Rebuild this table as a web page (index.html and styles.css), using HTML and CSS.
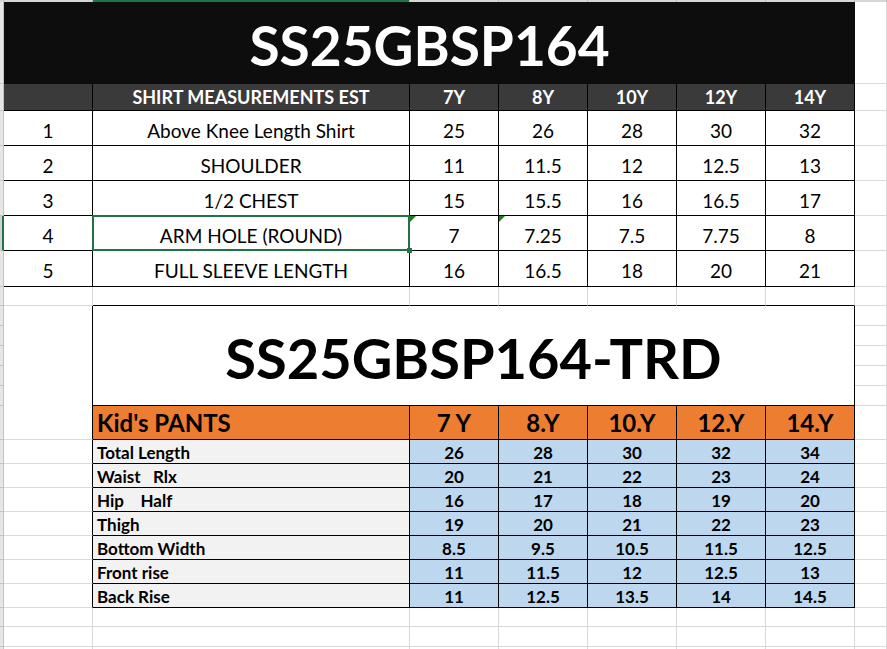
FILE: index.html
```html
<!DOCTYPE html>
<html>
<head>
<meta charset="utf-8">
<title>SS25GBSP164</title>
<link rel="stylesheet" href="styles.css">
</head>
<body>
<div class="sheet">
  <!-- column header edge -->
  <div class="rh top"></div><div class="ch"></div><div class="ch sel"></div><div class="ch"></div><div class="ch"></div><div class="ch"></div><div class="ch"></div><div class="ch"></div><div class="ch"></div>

  <!-- shirt title -->
  <div class="rh"></div><div class="title">SS25GBSP164</div><div class="g"></div>

  <!-- shirt header -->
  <div class="rh"></div>
  <div class="hdr"></div>
  <div class="hdr">SHIRT MEASUREMENTS EST</div>
  <div class="hdr">7Y</div><div class="hdr">8Y</div><div class="hdr">10Y</div><div class="hdr">12Y</div><div class="hdr">14Y</div>
  <div class="g"></div>

  <div class="rh"></div><div class="c">1</div><div class="c">Above Knee Length Shirt</div><div class="c">25</div><div class="c">26</div><div class="c">28</div><div class="c">30</div><div class="c">32</div><div class="g"></div>
  <div class="rh"></div><div class="c">2</div><div class="c">SHOULDER</div><div class="c">11</div><div class="c">11.5</div><div class="c">12</div><div class="c">12.5</div><div class="c">13</div><div class="g"></div>
  <div class="rh"></div><div class="c">3</div><div class="c">1/2 CHEST</div><div class="c">15</div><div class="c">15.5</div><div class="c">16</div><div class="c">16.5</div><div class="c">17</div><div class="g"></div>
  <div class="rh rsel"></div><div class="c">4</div><div class="c csel">ARM HOLE (ROUND)</div><div class="c err">7</div><div class="c err">7.25</div><div class="c">7.5</div><div class="c">7.75</div><div class="c">8</div><div class="g"></div>
  <div class="rh"></div><div class="c">5</div><div class="c">FULL SLEEVE LENGTH</div><div class="c">16</div><div class="c">16.5</div><div class="c">18</div><div class="c">20</div><div class="c">21</div><div class="g"></div>

  <!-- gap row -->
  <div class="rh"></div><div class="g"></div><div class="g bk-b"></div><div class="g bk-b"></div><div class="g bk-b"></div><div class="g bk-b"></div><div class="g bk-b"></div><div class="g bk-b"></div><div class="g"></div>

  <!-- pants title (5 sheet rows) -->
  <div class="rh"></div><div class="g bk-r aspan"></div><div class="ptitle">SS25GBSP164-TRD</div><div class="g"></div>
  <div class="rh"></div><div class="g"></div>
  <div class="rh"></div><div class="g"></div>
  <div class="rh"></div><div class="g"></div>
  <div class="rh"></div><div class="g"></div>

  <!-- pants header -->
  <div class="rh"></div><div class="g bk-r"></div>
  <div class="or left">Kid's PANTS</div>
  <div class="or">7 Y</div><div class="or">8.Y</div><div class="or">10.Y</div><div class="or">12.Y</div><div class="or">14.Y</div>
  <div class="g"></div>

  <div class="rh"></div><div class="g bk-r"></div><div class="lab">Total Length</div><div class="v">26</div><div class="v">28</div><div class="v">30</div><div class="v">32</div><div class="v">34</div><div class="g"></div>
  <div class="rh"></div><div class="g bk-r"></div><div class="lab">Waist&nbsp;&nbsp;&nbsp;Rlx</div><div class="v">20</div><div class="v">21</div><div class="v">22</div><div class="v">23</div><div class="v">24</div><div class="g"></div>
  <div class="rh"></div><div class="g bk-r"></div><div class="lab">Hip&nbsp;&nbsp;&nbsp;&nbsp;Half</div><div class="v">16</div><div class="v">17</div><div class="v">18</div><div class="v">19</div><div class="v">20</div><div class="g"></div>
  <div class="rh"></div><div class="g bk-r"></div><div class="lab">Thigh</div><div class="v">19</div><div class="v">20</div><div class="v">21</div><div class="v">22</div><div class="v">23</div><div class="g"></div>
  <div class="rh"></div><div class="g bk-r"></div><div class="lab">Bottom Width</div><div class="v">8.5</div><div class="v">9.5</div><div class="v">10.5</div><div class="v">11.5</div><div class="v">12.5</div><div class="g"></div>
  <div class="rh"></div><div class="g bk-r"></div><div class="lab">Front rise</div><div class="v">11</div><div class="v">11.5</div><div class="v">12</div><div class="v">12.5</div><div class="v">13</div><div class="g"></div>
  <div class="rh"></div><div class="g bk-r"></div><div class="lab">Back Rise</div><div class="v">11</div><div class="v">12.5</div><div class="v">13.5</div><div class="v">14</div><div class="v">14.5</div><div class="g"></div>

  <!-- empty rows -->
  <div class="rh"></div><div class="g"></div><div class="g"></div><div class="g"></div><div class="g"></div><div class="g"></div><div class="g"></div><div class="g"></div><div class="g"></div>
  <div class="rh"></div><div class="g"></div><div class="g"></div><div class="g"></div><div class="g"></div><div class="g"></div><div class="g"></div><div class="g"></div><div class="g"></div>
  <div class="rh nb"></div><div class="g nb"></div><div class="g nb"></div><div class="g nb"></div><div class="g nb"></div><div class="g nb"></div><div class="g nb"></div><div class="g nb"></div><div class="g nb"></div>
</div>
</body>
</html>
```

FILE: styles.css
```css
* {
  box-sizing: border-box;
  margin: 0;
  padding: 0;
}

body {
  margin: 0;
  background: #ffffff;
  font-family: Lato, "Open Sans", sans-serif;
  color: #000000;
}

.sheet {
  display: grid;
  width: 887px;
  height: 649px;
  overflow: hidden;
  grid-template-columns: 4px 89px 317px repeat(5, 89px) 32px;
  grid-template-rows: 2px 82px 27px 35px 35px 35px 35px 36px 19px repeat(5, 20px) 34px repeat(7, 24px) 19px 20px 2px;
}

/* row header strip */
.rh {
  background: #e6e6e6;
  border-right: 1px solid #c3c3c3;
  border-bottom: 1px solid #c3c3c3;
}

.rh.top {
  background: #d6d6d6;
  border-bottom: none;
}

.rh.rsel {
  background: #d2d2d2;
  border-right: 2px solid #217346;
}

.rh.nb {
  border-bottom: none;
}

/* column header edge */
.ch {
  background: #d6d6d6;
  border-right: 1px solid #bdbdbd;
}

.ch.sel {
  background: #217346;
}

/* gridline cells */
.g {
  border-right: 1px solid #d9d9d9;
  border-bottom: 1px solid #d9d9d9;
}

.g.bk-r {
  border-right-color: #000000;
}

.g.bk-b {
  border-bottom-color: #000000;
}

.g.nb {
  border-bottom: none;
}

.g.aspan {
  grid-row: span 5;
  border-bottom: none;
}

/* shirt table */
.title {
  grid-column: span 7;
  background: #0d0d0d;
  color: #ffffff;
  font-weight: 700;
  font-size: 55px;
  line-height: 1;
  display: flex;
  align-items: center;
  justify-content: center;
  padding-top: 4px;
}

.hdr {
  background: #3a3a3a;
  color: #ffffff;
  font-weight: 700;
  font-size: 18px;
  line-height: 1;
  border-right: 1px solid #000000;
  border-bottom: 1px solid #000000;
  display: flex;
  align-items: center;
  justify-content: center;
}

.c {
  position: relative;
  background: #ffffff;
  border-right: 1px solid #000000;
  border-bottom: 1px solid #000000;
  display: flex;
  align-items: center;
  justify-content: center;
  font-size: 19px;
  line-height: 1;
  padding-top: 4px;
}

.c.csel::before {
  content: "";
  position: absolute;
  left: -1px;
  top: -1px;
  right: -1px;
  bottom: -1px;
  border: 2px solid #217346;
  z-index: 2;
}

.c.csel::after {
  content: "";
  position: absolute;
  right: -3px;
  bottom: -3px;
  width: 5px;
  height: 5px;
  background: #217346;
  z-index: 3;
}

.c.err::before {
  content: "";
  position: absolute;
  left: 0;
  top: 0;
  width: 0;
  height: 0;
  border-top: 6px solid #1e7b1e;
  border-right: 6px solid transparent;
}

/* pants table */
.ptitle {
  grid-column: span 6;
  grid-row: span 5;
  background: #ffffff;
  border-right: 1px solid #000000;
  border-bottom: 1px solid #000000;
  font-weight: 700;
  font-size: 56px;
  line-height: 1;
  display: flex;
  align-items: center;
  justify-content: center;
  padding-top: 4px;
}

.or {
  background: #ed7d31;
  border-right: 1px solid #000000;
  border-bottom: 1px solid #000000;
  font-weight: 700;
  font-size: 24px;
  line-height: 1;
  display: flex;
  align-items: center;
  justify-content: center;
}

.or.left {
  justify-content: flex-start;
  padding-left: 4px;
}

.lab {
  background: #f2f2f2;
  border-right: 1px solid #000000;
  border-bottom: 1px solid #000000;
  font-weight: 700;
  font-size: 17px;
  line-height: 1;
  display: flex;
  align-items: center;
  padding-left: 4px;
  padding-top: 1px;
  white-space: pre;
}

.v {
  background: #bdd7ee;
  border-right: 1px solid #000000;
  border-bottom: 1px solid #000000;
  font-weight: 700;
  font-size: 17px;
  line-height: 1;
  display: flex;
  align-items: center;
  justify-content: center;
  padding-top: 1px;
}
```
